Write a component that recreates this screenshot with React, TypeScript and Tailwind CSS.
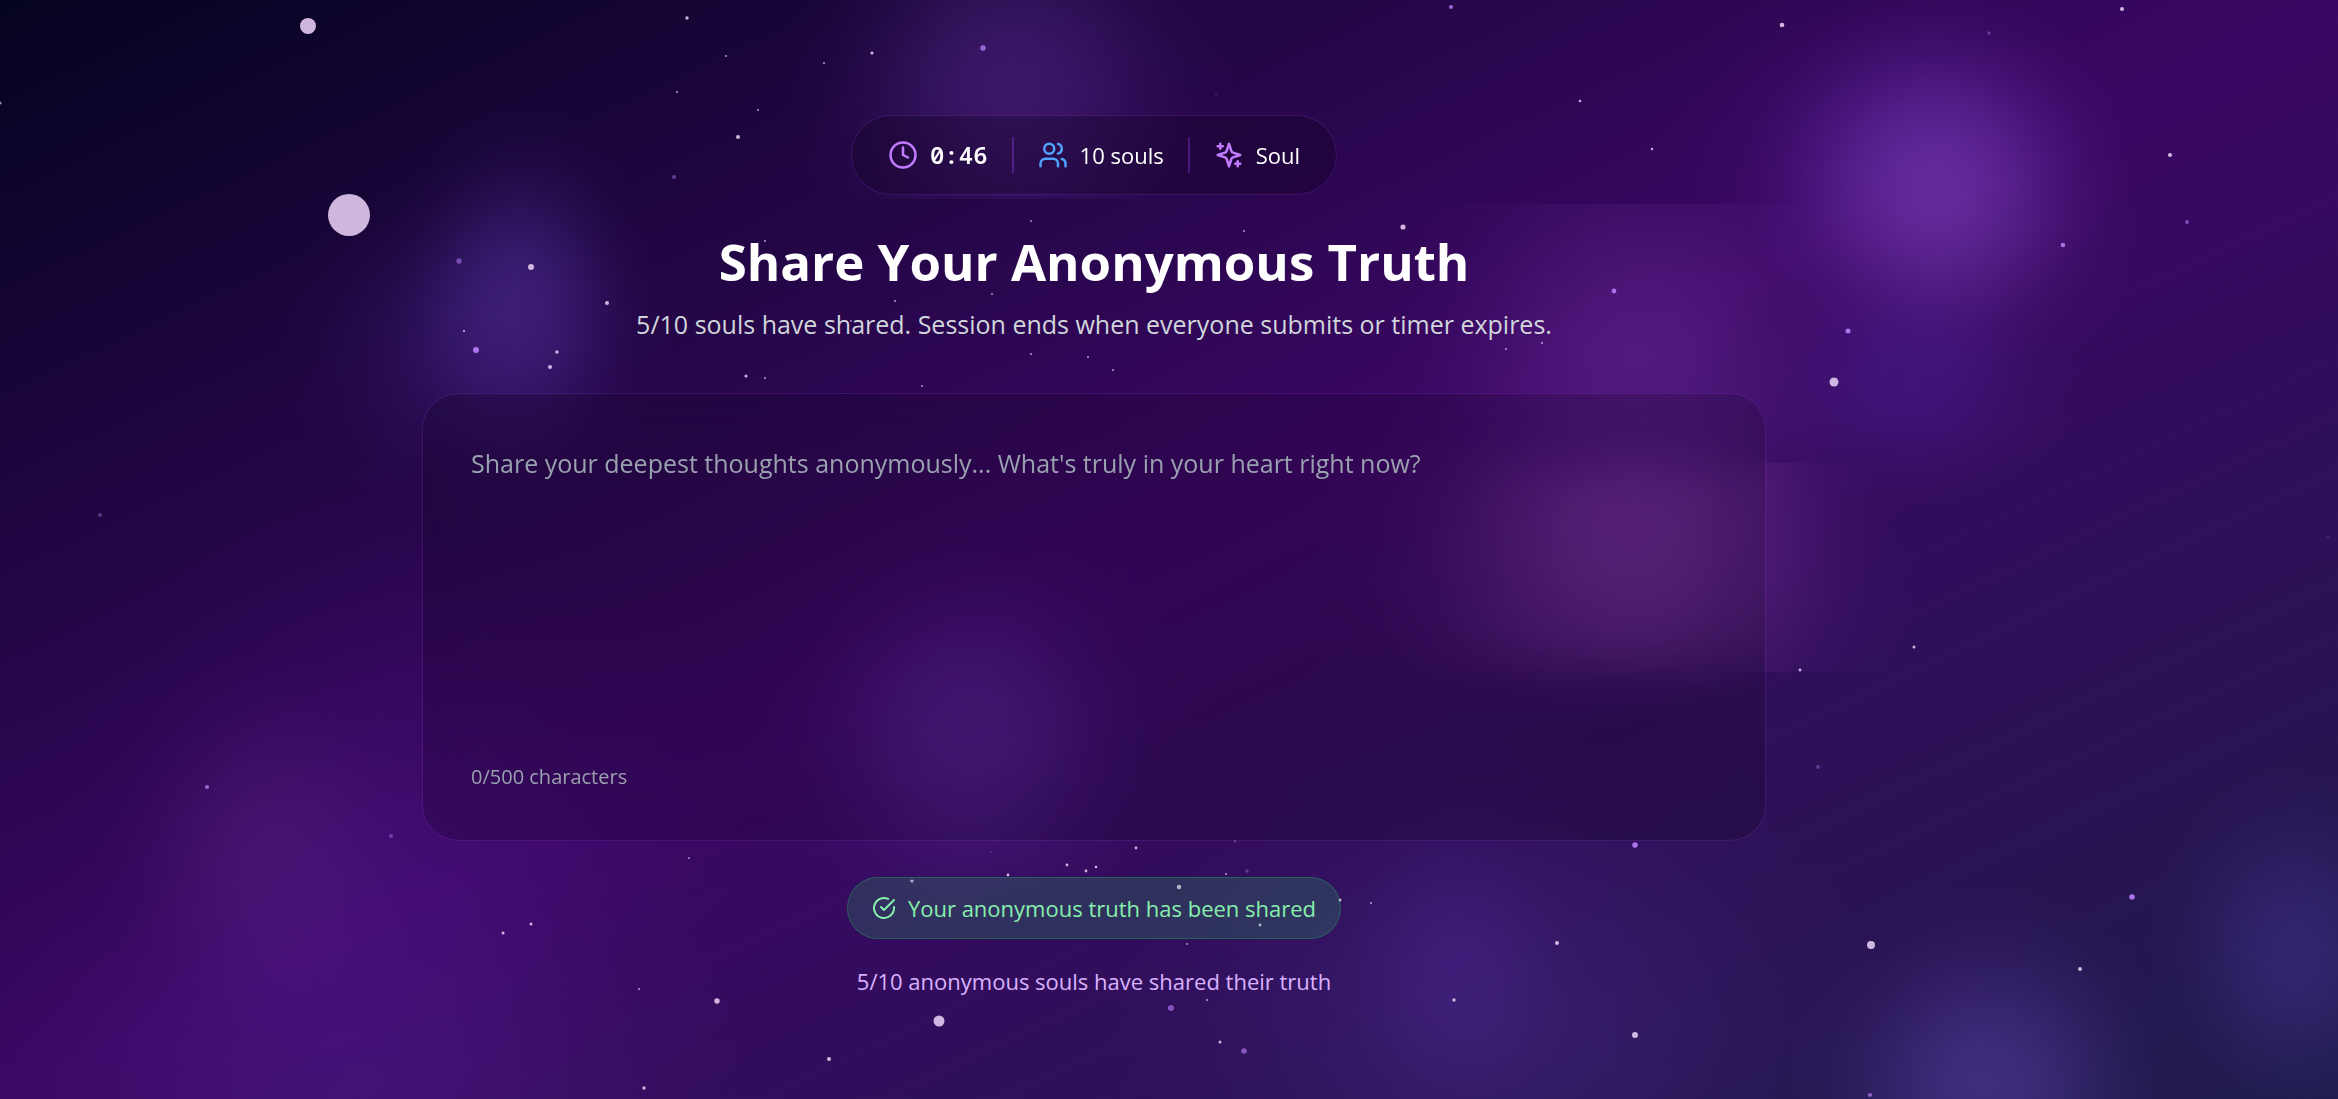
import { useState } from 'react';
import type { ReactNode } from 'react';
import { Clock, Users } from 'lucide-react';

const MAX_LENGTH = 500;

// ── Sky ───────────────────────────────────────────────────────────────────────

type Glow = { x: number; y: number; rx: number; ry: number; color: string; alpha: number; clip?: [number, number] };

// clip holds the top and bottom edge of the band a glow is cut to
const GLOWS: Glow[] = [
  { x: 1010, y: 80, rx: 225, ry: 220, color: '#8446cc', alpha: 0.28, clip: [0, 199] },
  { x: 520, y: 290, rx: 135, ry: 190, color: '#6d48d0', alpha: 0.28 },
  { x: 475, y: 340, rx: 200, ry: 180, color: '#6440c4', alpha: 0.2 },
  { x: 1938, y: 180, rx: 190, ry: 200, color: '#9054dc', alpha: 0.34 },
  { x: 1890, y: 150, rx: 240, ry: 190, color: '#7c3ad8', alpha: 0.16 },
  { x: 1945, y: 230, rx: 200, ry: 180, color: '#a050d0', alpha: 0.14 },
  { x: 1912, y: 384, rx: 170, ry: 130, color: '#5b34d0', alpha: 0.22 },
  { x: 1640, y: 360, rx: 260, ry: 290, color: '#9b4fd0', alpha: 0.24, clip: [204, 610] },
  { x: 1635, y: 550, rx: 260, ry: 230, color: '#a84cb8', alpha: 0.3, clip: [463, 672] },
  { x: 1620, y: 580, rx: 300, ry: 250, color: '#9040b8', alpha: 0.18, clip: [463, 672] },
  { x: 970, y: 730, rx: 200, ry: 205, color: '#7c4ae0', alpha: 0.28 },
  { x: 265, y: 850, rx: 170, ry: 200, color: '#9450a8', alpha: 0.14 },
  { x: 400, y: 830, rx: 350, ry: 340, color: '#6c22be', alpha: 0.15 },
  { x: 340, y: 1099, rx: 420, ry: 320, color: '#7436c8', alpha: 0.19 },
  { x: 1455, y: 965, rx: 130, ry: 170, color: '#7040e0', alpha: 0.14 },
  { x: 1500, y: 1030, rx: 400, ry: 300, color: '#6d48c8', alpha: 0.18 },
  { x: 1985, y: 1085, rx: 200, ry: 200, color: '#7454d0', alpha: 0.36 },
  { x: 2295, y: 955, rx: 150, ry: 190, color: '#6450d0', alpha: 0.25 },
];

const PALE = '#dec6ec';
const VIOLET = '#b47af5';

// [x, y, radius, colour, opacity]
const STARS: [number, number, number, string, number][] = [
  [349, 215, 21, PALE, 0.92], [308, 26, 8, PALE, 0.92], [1834, 382, 4.5, PALE, 0.92], [1871, 945, 4, PALE, 0.92],
  [939, 1021, 5.5, PALE, 0.92], [531, 267, 3, PALE, 0.92], [717, 1001, 2.7, PALE, 0.92], [1635, 1035, 3, PALE, 0.92],
  [1403, 227, 2.6, PALE, 0.92], [1782, 25, 2.3, PALE, 0.92], [2122, 9, 2, PALE, 0.92], [2170, 155, 2.1, PALE, 0.92],
  [2080, 969, 2, PALE, 0.92], [1557, 943, 2, PALE, 0.92], [1179, 887, 2.2, PALE, 0.92], [829, 1059, 2, PALE, 0.92],
  [738, 137, 2, PALE, 0.92], [607, 303, 2, PALE, 0.92], [550, 367, 2, PALE, 0.92], [557, 352, 1.7, PALE, 0.9],
  [687, 18, 1.7, PALE, 0.9], [746, 376, 1.6, PALE, 0.9], [872, 53, 1.6, PALE, 0.9], [912, 881, 1.6, PALE, 0.9],
  [1454, 1000, 1.7, PALE, 0.9], [644, 1088, 1.7, PALE, 0.9], [531, 924, 1.5, PALE, 0.9], [503, 933, 1.5, PALE, 0.9],
  [1914, 647, 1.5, PALE, 0.9], [1800, 670, 1.4, PALE, 0.9], [1340, 900, 1.5, PALE, 0.9], [1220, 1042, 1.5, PALE, 0.9],
  [1136, 848, 1.4, PALE, 0.9], [1067, 865, 1.4, PALE, 0.9], [1086, 871, 1.4, PALE, 0.9], [1096, 867, 1.3, PALE, 0.9],
  [1008, 875, 1.4, PALE, 0.9], [1260, 925, 1.4, PALE, 0.9], [1580, 101, 1.3, PALE, 0.9], [1652, 149, 1.2, PALE, 0.9],
  [464, 331, 1.1, PALE, 0.9], [726, 56, 1, PALE, 0.8], [677, 92, 1, PALE, 0.8], [758, 110, 1, PALE, 0.8],
  [765, 378, 1, PALE, 0.8], [765, 241, 1, PALE, 0.8], [0, 103, 1.5, PALE, 0.7], [689, 858, 1, PALE, 0.7],
  [639, 989, 1, PALE, 0.8], [824, 63, 1, PALE, 0.8], [1031, 221, 1, PALE, 0.7], [1244, 231, 1, PALE, 0.8],
  [895, 301, 1, PALE, 0.8], [992, 294, 1, PALE, 0.7], [851, 321, 1, PALE, 0.7], [1031, 354, 1, PALE, 0.8],
  [1088, 357, 1, PALE, 0.8], [1113, 370, 1, PALE, 0.8], [922, 386, 1, PALE, 0.7], [1506, 349, 1, PALE, 0.8],
  [1542, 343, 1, PALE, 0.8], [1226, 874, 1, PALE, 0.8], [1371, 903, 1, PALE, 0.8], [1187, 944, 1, PALE, 0.7],
  [1207, 1000, 1, PALE, 0.8], [1235, 841, 1, PALE, 0.6],
  [476, 350, 3, VIOLET, 0.95], [983, 48, 2.8, VIOLET, 0.8], [1635, 845, 2.8, VIOLET, 0.95], [2132, 897, 2.8, VIOLET, 0.95],
  [1848, 331, 2.5, VIOLET, 0.95], [1614, 291, 2.4, VIOLET, 0.9], [2063, 245, 2.3, VIOLET, 0.9], [1171, 1008, 3, VIOLET, 0.65],
  [1244, 1051, 2.8, VIOLET, 0.65], [459, 261, 2.7, VIOLET, 0.55], [1451, 7, 2.1, VIOLET, 0.8], [207, 787, 2.1, VIOLET, 0.8],
  [1870, 1095, 2.1, VIOLET, 0.7], [2187, 222, 1.9, VIOLET, 0.6], [674, 177, 2.1, VIOLET, 0.45], [391, 836, 2.1, VIOLET, 0.45],
  [100, 515, 2, VIOLET, 0.4], [1989, 33, 1.8, VIOLET, 0.4], [1818, 767, 1.9, VIOLET, 0.4], [1247, 871, 1.7, VIOLET, 0.4],
  [1216, 94, 1.2, VIOLET, 0.2], [991, 852, 1.2, VIOLET, 0.2], [2328, 537, 1.2, VIOLET, 0.2],
];

function Sky() {
  return (
    <svg
      className="pointer-events-none absolute inset-0 h-full w-full"
      viewBox="0 0 2338 1099"
      preserveAspectRatio="xMidYMid slice"
      aria-hidden="true"
    >
      <defs>
        {GLOWS.map((g, i) => (
          <radialGradient key={i} id={`glow-${i}`}>
            <stop offset="0" stopColor={g.color} stopOpacity={g.alpha} />
            <stop offset="0.2" stopColor={g.color} stopOpacity={g.alpha * 0.88} />
            <stop offset="0.4" stopColor={g.color} stopOpacity={g.alpha * 0.62} />
            <stop offset="0.6" stopColor={g.color} stopOpacity={g.alpha * 0.32} />
            <stop offset="0.8" stopColor={g.color} stopOpacity={g.alpha * 0.1} />
            <stop offset="1" stopColor={g.color} stopOpacity="0" />
          </radialGradient>
        ))}
        {GLOWS.map((g, i) =>
          g.clip ? (
            <clipPath key={i} id={`band-${i}`}>
              <rect x="0" y={g.clip[0]} width="2338" height={g.clip[1] - g.clip[0]} />
            </clipPath>
          ) : null,
        )}
      </defs>
      {GLOWS.map((g, i) => (
        <ellipse
          key={i}
          cx={g.x}
          cy={g.y}
          rx={g.rx}
          ry={g.ry}
          fill={`url(#glow-${i})`}
          clipPath={g.clip ? `url(#band-${i})` : undefined}
        />
      ))}
      {STARS.map(([x, y, r, color, opacity]) => (
        <circle key={`${x}-${y}`} cx={x} cy={y} r={r} fill={color} opacity={opacity} />
      ))}
    </svg>
  );
}

// ── Icons ─────────────────────────────────────────────────────────────────────

function Stroked({ className, children }: { className: string; children: ReactNode }) {
  return (
    <svg
      className={className}
      viewBox="0 0 24 24"
      fill="none"
      stroke="currentColor"
      strokeWidth="2"
      strokeLinecap="round"
      strokeLinejoin="round"
      aria-hidden="true"
    >
      {children}
    </svg>
  );
}

function SparklesIcon({ className }: { className: string }) {
  return (
    <Stroked className={className}>
      <path d="m12 3-1.912 5.813a2 2 0 0 1-1.275 1.275L3 12l5.813 1.912a2 2 0 0 1 1.275 1.275L12 21l1.912-5.813a2 2 0 0 1 1.275-1.275L21 12l-5.813-1.912a2 2 0 0 1-1.275-1.275L12 3Z" />
      <path d="M5 3v4" />
      <path d="M19 17v4" />
      <path d="M3 5h4" />
      <path d="M17 19h4" />
    </Stroked>
  );
}

function CheckIcon({ className }: { className: string }) {
  return (
    <Stroked className={className}>
      <path d="M22 11.08V12a10 10 0 1 1-5.93-9.14" />
      <path d="m9 11 3 3L22 4" />
    </Stroked>
  );
}

// ── Status bar ────────────────────────────────────────────────────────────────

function StatusItem({ icon, children }: { icon: ReactNode; children: ReactNode }) {
  return (
    <div className="flex items-center gap-3">
      {icon}
      {children}
    </div>
  );
}

function StatusDivider() {
  return <div className="h-9 w-0.5 bg-purple-500/30" />;
}

function StatusBar() {
  return (
    <div className="flex items-center gap-6 rounded-full border border-purple-500/20 bg-black/20 px-9 py-[21px] text-[22px] leading-9 font-medium text-white backdrop-blur-xl">
      <StatusItem icon={<Clock className="h-[30px] w-[30px] text-purple-400" />}>
        <span className="font-['Noto_Sans_Mono','Roboto_Mono','DejaVu_Sans_Mono',monospace] text-2xl leading-9 font-semibold">
          0:46
        </span>
      </StatusItem>
      <StatusDivider />
      <StatusItem icon={<Users className="h-[30px] w-[30px] text-blue-400" />}>
        <span>10 souls</span>
      </StatusItem>
      <StatusDivider />
      <StatusItem icon={<SparklesIcon className="h-[30px] w-[30px] text-purple-400" />}>
        <span>Soul</span>
      </StatusItem>
    </div>
  );
}

// ── Page ──────────────────────────────────────────────────────────────────────

export default function App() {
  const [text, setText] = useState('');

  return (
    <div className="relative min-h-screen overflow-hidden bg-[linear-gradient(to_bottom_right,#050420,#3b0764,#1e1b4b)] font-['Open_Sans','Noto_Sans',sans-serif]">
      <Sky />
      <main className="relative flex flex-col items-center pt-[115px] pr-[150px] pb-16">
        <StatusBar />

        <h1 className="mt-9 text-[51px] leading-[60px] font-bold text-white">Share Your Anonymous Truth</h1>
        <p className="mt-3 text-[25px] leading-[42px] text-gray-300">
          5/10 souls have shared. Session ends when everyone submits or timer expires.
        </p>

        <section className="mt-12 w-full max-w-[1344px] rounded-[36px] border border-purple-500/20 bg-black/15 p-12 backdrop-blur-xl">
          <textarea
            aria-label="Your anonymous truth"
            className="block h-72 w-full resize-none bg-transparent text-[25px] leading-[42px] text-white outline-none placeholder:text-gray-400"
            placeholder="Share your deepest thoughts anonymously... What's truly in your heart right now?"
            maxLength={MAX_LENGTH}
            value={text}
            onChange={(e) => setText(e.target.value)}
          />
          <p className="mt-8 text-[20px] leading-[30px] text-gray-400">
            {text.length}/{MAX_LENGTH} characters
          </p>
        </section>

        <div className="mt-9 flex items-center gap-3 rounded-full border border-[#22c55e]/30 bg-[#22c55e]/20 px-6 py-3 text-[22px] leading-9 text-[#86efac]">
          <CheckIcon className="h-6 w-6" />
          <span>Your anonymous truth has been shared</span>
        </div>
        <p className="mt-6 text-[22px] leading-9 text-purple-300">5/10 anonymous souls have shared their truth</p>
      </main>
    </div>
  );
}
